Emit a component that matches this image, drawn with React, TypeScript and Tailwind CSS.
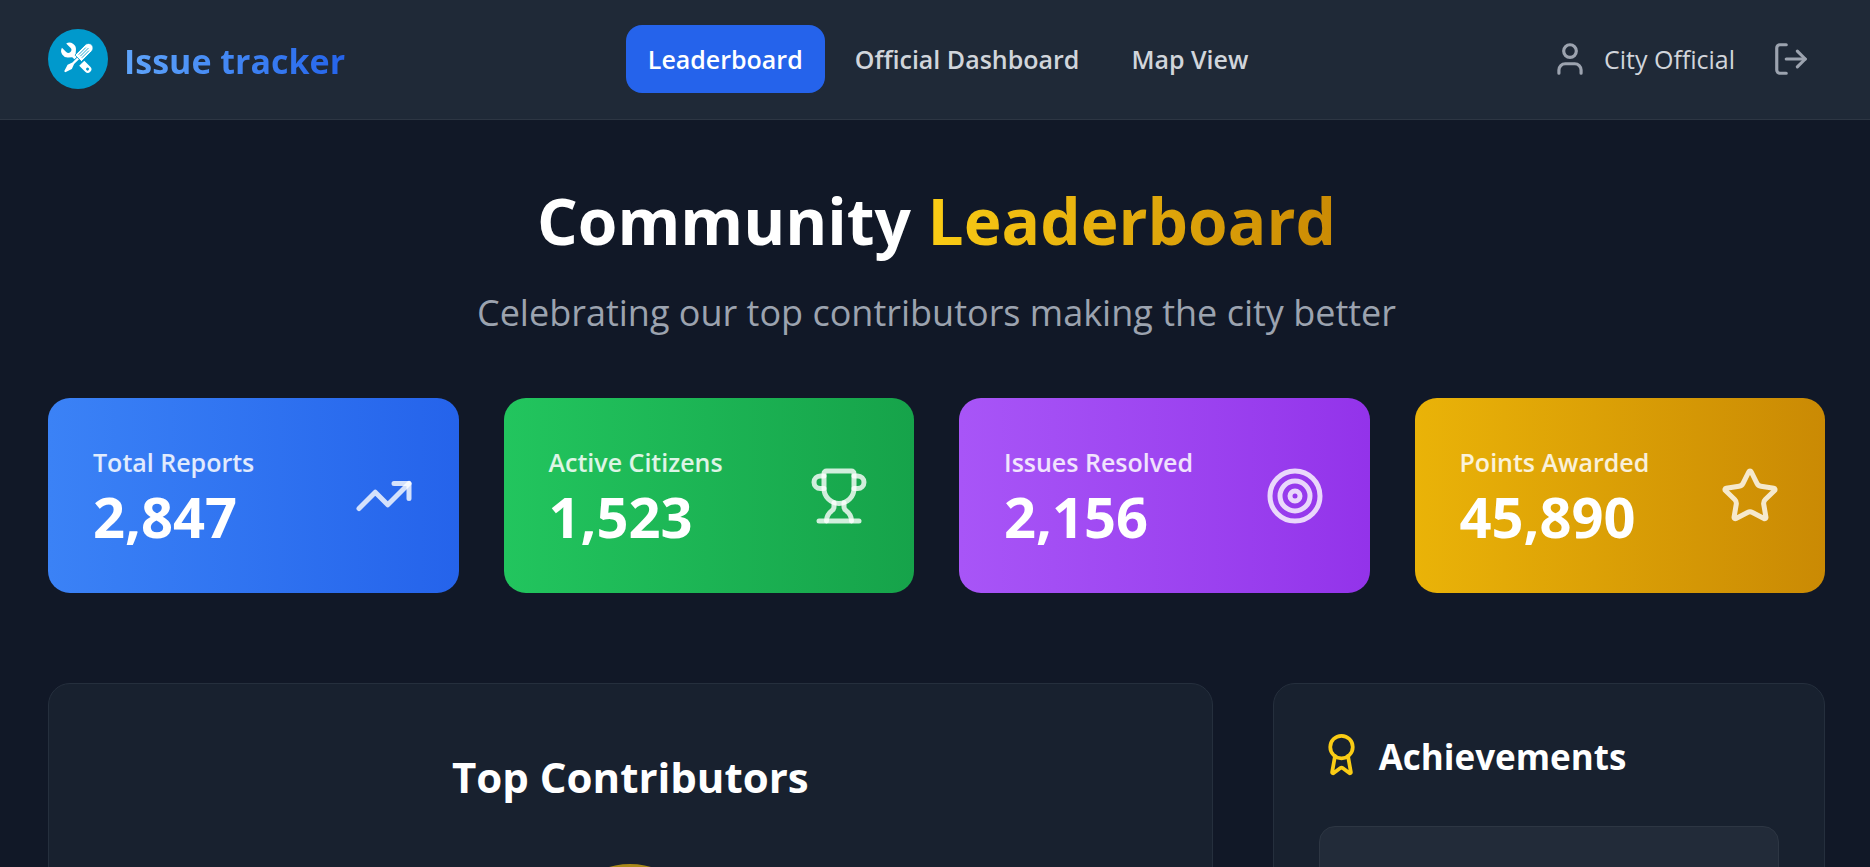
import { Award, LogOut, Star, Target, TrendingUp, Trophy, User } from "lucide-react";

const stats = [
  { label: "Total Reports", value: "2,847", Icon: TrendingUp, bg: "from-[#3b82f6] to-[#2563eb]" },
  { label: "Active Citizens", value: "1,523", Icon: Trophy, bg: "from-[#22c55e] to-[#16a34a]" },
  { label: "Issues Resolved", value: "2,156", Icon: Target, bg: "from-[#a855f7] to-[#9333ea]" },
  { label: "Points Awarded", value: "45,890", Icon: Star, bg: "from-[#eab308] to-[#ca8a04]" },
];

function Logo() {
  return (
    <svg viewBox="0 0 60 60" className="size-[60px]" aria-hidden="true">
      <circle cx="30" cy="30" r="30" fill="#0099cc" />
      <g transform="translate(29.5 30) rotate(-45)">
        <path
          d="M-3 -19 a6.6 6.6 0 0 0 -2.4 11.4 L-2.4 -5 V-2 H2.4 V-5 L5.4 -7.6 a6.6 6.6 0 0 0 -2.4 -11.4 V-13 a3 3 0 0 1 -6 0 Z"
          fill="#fff"
        />
        <path d="M-3.6 6 H3.6 V14.5 a3.6 3.6 0 0 1 -7.2 0 Z" fill="#fff" />
        <circle cx="0" cy="14.2" r="1.5" fill="#0099cc" />
      </g>
      <g transform="translate(29.5 30) rotate(45)">
        <path d="M-1.2 -2 H1.2 V6 L3 11 L0.8 18 H-0.8 L-3 11 L-1.2 6 Z" fill="#fff" />
        <path d="M-4.6 -1 V-15.5 a4.6 4.6 0 0 1 9.2 0 V-1 Z" fill="#fff" stroke="#0099cc" strokeWidth="0.8" />
        <path d="M-2.2 -4 V-14 M0 -4 V-15.5 M2.2 -4 V-14" stroke="#0099cc" strokeWidth="0.8" fill="none" />
      </g>
    </svg>
  );
}

export default function App() {
  return (
    <div className="h-screen overflow-hidden bg-[#111827] font-['Open_Sans','Noto_Sans',sans-serif] text-white">
      <header className="flex items-center justify-between border-b border-[#2d3643] bg-[#1f2937] pt-[25px] pr-[45px] pb-[26px] pl-12">
        <a href="#home" className="flex items-center gap-4">
          <Logo />
          <span className="bg-linear-to-r from-[#60a5fa] to-[#2563eb] bg-clip-text pt-1 text-[34px] leading-[52px] font-bold text-transparent">
            Issue tracker
          </span>
        </a>
        <nav className="flex gap-2 text-[25px] leading-[38px] font-semibold text-[#d1d5db]">
          <a href="#leaderboard" className="rounded-2xl bg-[#2563eb] px-[22px] py-[15px] text-white">Leaderboard</a>
          <a href="#dashboard" className="px-[22px] py-[15px]">Official Dashboard</a>
          <a href="#map" className="px-[22px] py-[15px]">Map View</a>
        </nav>
        <div className="flex items-center">
          <User className="mr-[15px] size-[38px] text-[#9ca3af]" />
          <span className="mr-[22px] text-[25px] leading-[38px] text-[#d1d5db]">City Official</span>
          <button type="button" aria-label="Log out" className="px-[15px] text-[#9ca3af]">
            <LogOut className="size-[38px]" />
          </button>
        </div>
      </header>

      <main className="pt-[63px] pr-[45px] pl-12">
        <div className="mb-[59px] text-center">
          <h1 className="mb-7 text-[64px] leading-[75px] font-bold">
            Community{" "}
            <span className="bg-linear-to-r from-[#facc15] to-[#ca8a04] bg-clip-text text-transparent">
              Leaderboard
            </span>
          </h1>
          <p className="text-[36px] leading-[53px] text-[#9ca3af]">
            Celebrating our top contributors making the city better
          </p>
        </div>

        <section className="mb-[90px] grid grid-cols-4 gap-[45px]">
          {stats.map(({ label, value, Icon, bg }) => (
            <div key={label} className={`flex items-center justify-between rounded-[22px] bg-linear-to-r px-[45px] py-[43px] ${bg}`}>
              <div>
                <p className="text-[25px] leading-[42px] font-semibold text-white/85">{label}</p>
                <p className="text-[56px] leading-[67px] font-bold">{value}</p>
              </div>
              <Icon className="size-[60px] text-white/80" />
            </div>
          ))}
        </section>

        <div className="grid grid-cols-3 gap-[60px]">
          <section className="col-span-2 rounded-[22px] border border-[#252f3d] bg-[#18212f] px-[60px] pt-[63px] pb-[60px]">
            <h2 className="mb-[57px] text-center text-[42px] leading-[60px] font-bold">Top Contributors</h2>
            <div className="mx-auto size-[150px] rounded-full bg-[#a98a1a]" />
          </section>
          <section className="rounded-[22px] border border-[#252f3d] bg-[#18212f] p-[45px]">
            <h2 className="mb-[41px] flex items-start gap-[15px] text-[35px] leading-[56px] font-bold">
              <Award className="mt-[3px] size-[45px] text-[#facc15]" />
              Achievements
            </h2>
            <div className="flex items-center gap-[22px] rounded-2xl border border-[#2d3643] bg-[#222b39] p-[30px]">
              <Star className="size-[60px] text-[#facc15]" />
              <div>
                <p className="text-[28px] leading-[42px] font-semibold">First Report</p>
                <p className="text-[25px] leading-[38px] text-[#9ca3af]">Reported an issue</p>
              </div>
            </div>
          </section>
        </div>
      </main>
    </div>
  );
}
